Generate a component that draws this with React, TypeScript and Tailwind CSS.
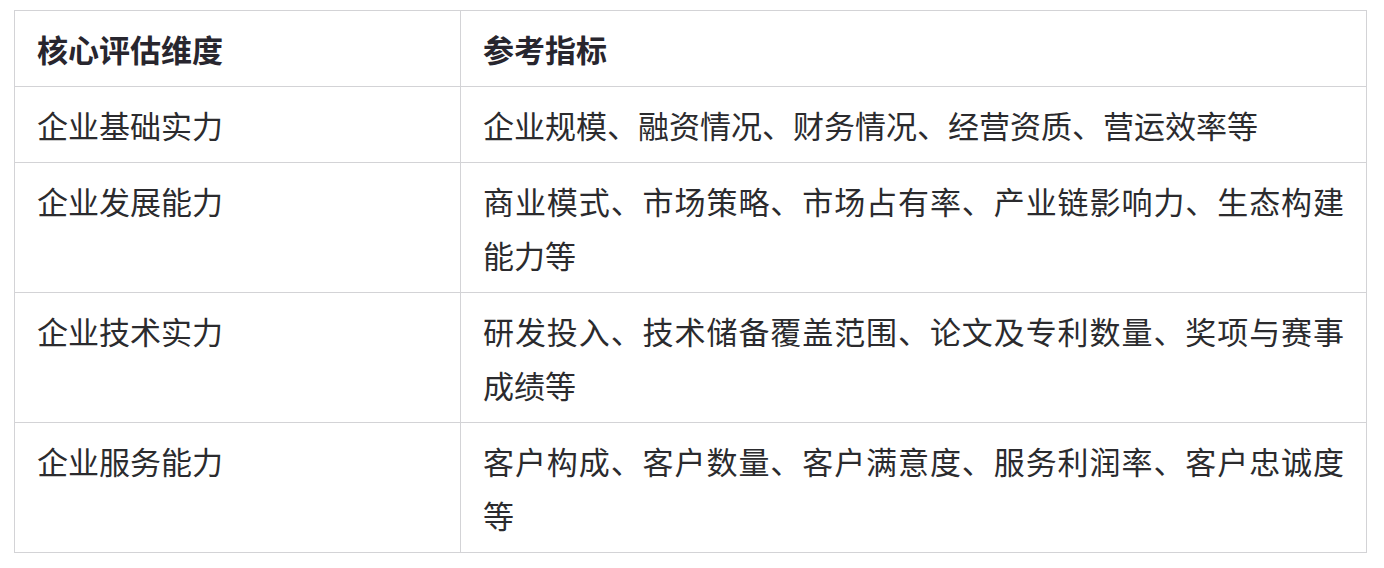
import React from "react";

const rows: [string, string][] = [
  ["企业基础实力", "企业规模、融资情况、财务情况、经营资质、营运效率等"],
  ["企业发展能力", "商业模式、市场策略、市场占有率、产业链影响力、生态构建能力等"],
  ["企业技术实力", "研发投入、技术储备覆盖范围、论文及专利数量、奖项与赛事成绩等"],
  ["企业服务能力", "客户构成、客户数量、客户满意度、服务利润率、客户忠诚度等"],
];

export default function App() {
  return (
    <div
      className="w-[1384px] h-[568px] bg-white pt-[10px] pl-[14px]"
      style={{ fontFamily: '"Noto Sans CJK SC", "Noto Sans", sans-serif' }}
    >
      <div className="w-[1353px] border border-[#d3d3d6] text-[31px] leading-[54px] text-[#2b2b2e]">
        <div className="grid grid-cols-[445px_1fr] border-b border-[#d3d3d6] font-bold text-[#28262e]">
          <div className="px-[22px] py-[10.5px]">核心评估维度</div>
          <div className="border-l border-[#d3d3d6] px-[22px] py-[10.5px]">参考指标</div>
        </div>
        {rows.map(([a, b], i) => (
          <div
            key={a}
            className={
              "grid grid-cols-[445px_1fr] " +
              (i < rows.length - 1 ? "border-b border-[#d3d3d6]" : "")
            }
          >
            <div className="px-[22px] py-[10.5px]">{a}</div>
            <div className="border-l border-[#d3d3d6] px-[22px] py-[10.5px] text-justify">{b}</div>
          </div>
        ))}
      </div>
    </div>
  );
}
